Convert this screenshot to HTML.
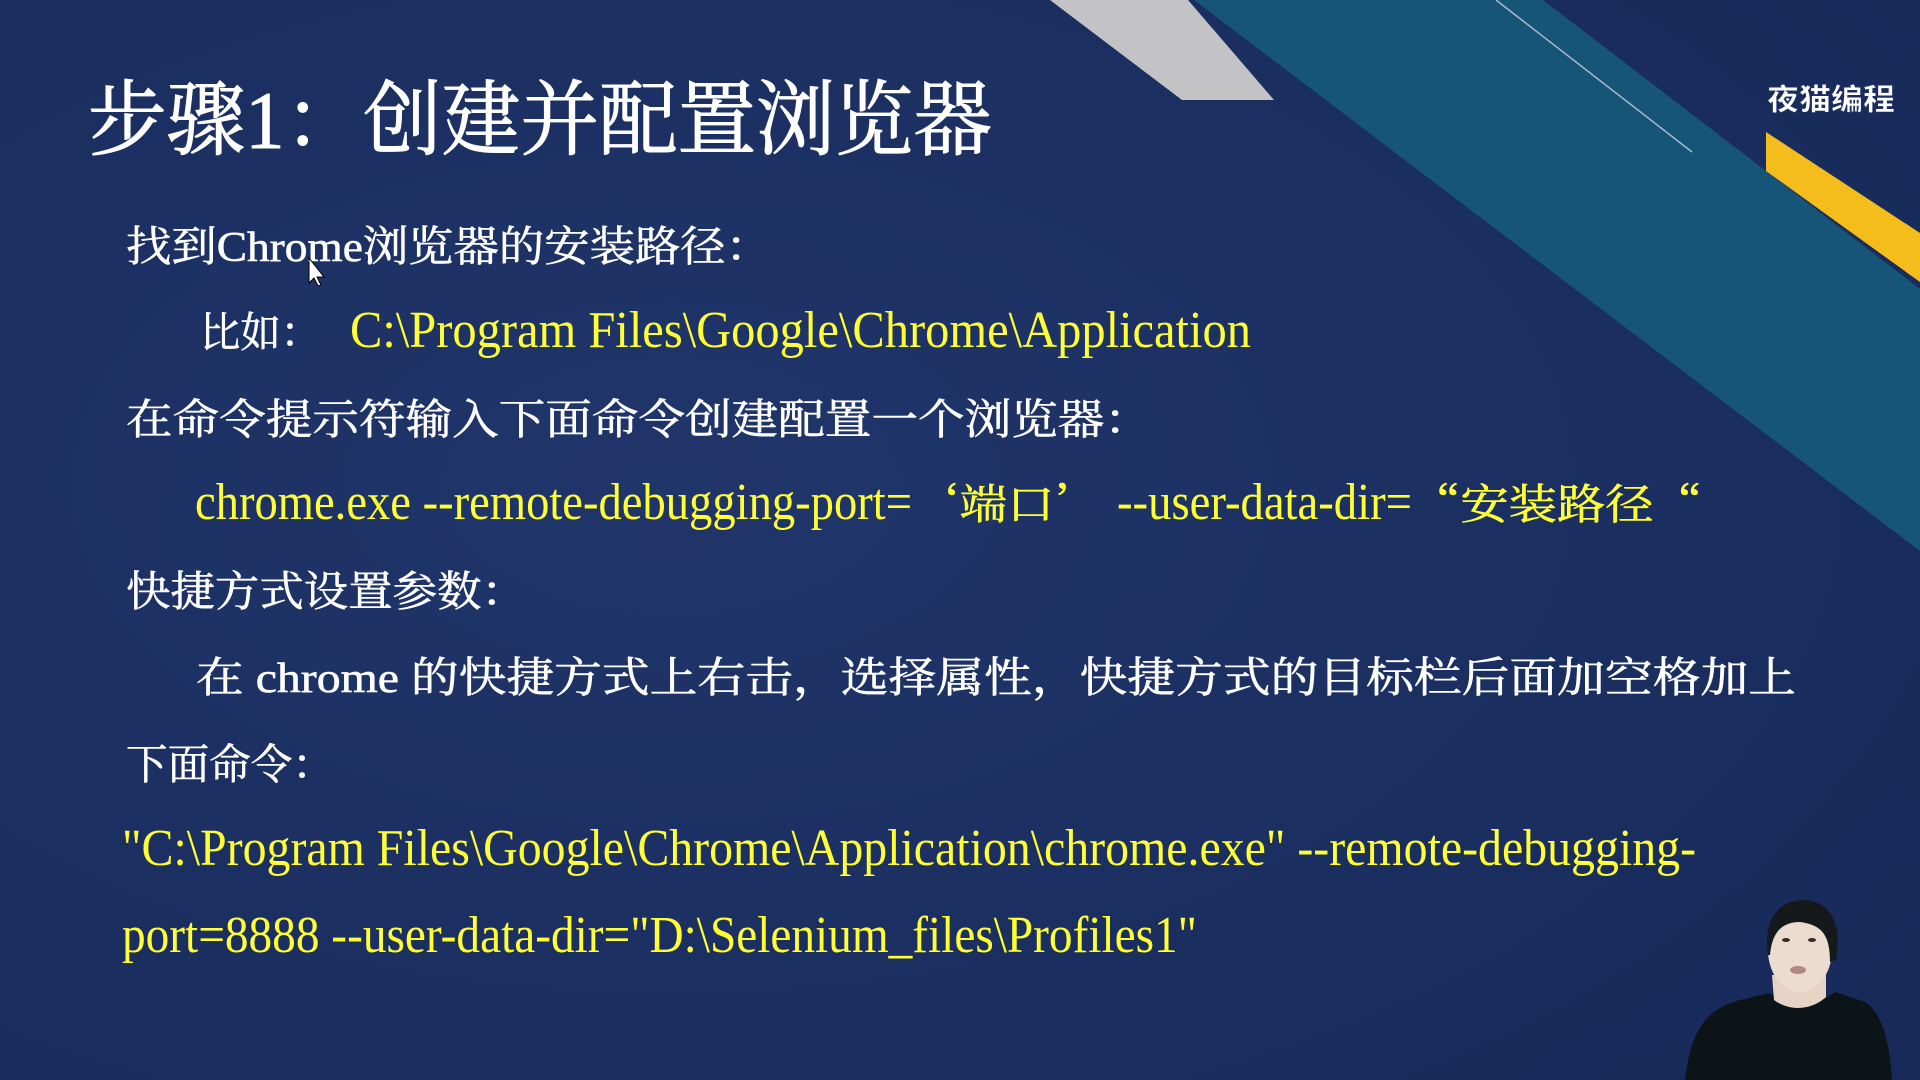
<!DOCTYPE html>
<html><head><meta charset="utf-8"><style>
html,body{margin:0;padding:0;width:1920px;height:1080px;overflow:hidden;background:#1b2f62}
svg{display:block}
.cj{font-family:"Liberation Serif","Noto Serif CJK SC",serif;fill:#fff;stroke:#fff;stroke-width:0.6}
.y{font-family:"Liberation Serif","Noto Serif CJK SC",serif;fill:#ffff33}
.yc{font-family:"Noto Serif CJK SC",serif;fill:#ffff33;stroke:#ffff33;stroke-width:0.6}
</style></head><body>
<svg width="1920" height="1080" viewBox="0 0 1920 1080" xmlns="http://www.w3.org/2000/svg">
<defs>
<radialGradient id="bg" cx="0.35" cy="0.45" r="0.8">
<stop offset="0" stop-color="#20356a"/><stop offset="1" stop-color="#172a5a"/>
</radialGradient>
</defs>
<rect width="1920" height="1080" fill="url(#bg)"/>
<polygon points="1194,0 1543,0 1920,289 1920,551" fill="#165577"/>
<polygon points="1050,0 1188,0 1274,100 1182,100" fill="#c3c3c5"/>
<line x1="1496" y1="0" x2="1692" y2="152" stroke="#a9b8cc" stroke-width="1.5"/>
<polygon points="1766,132 1920,233 1920,282 1766,171" fill="#f5bd1c"/>
<text x="1767" y="110" font-family="'Noto Sans CJK SC',sans-serif" font-weight="900" font-size="30" fill="#fff" stroke="#1b2f62" stroke-width="1" textLength="128" lengthAdjust="spacingAndGlyphs">夜猫编程</text>

<text class="cj" x="88" y="148" font-size="82" textLength="904" lengthAdjust="spacingAndGlyphs" style="stroke-width:1">步骤1：创建并配置浏览器</text>

<text class="cj" x="126" y="261" font-size="42" textLength="645" lengthAdjust="spacingAndGlyphs">找到Chrome浏览器的安装路径：</text>
<text class="cj" x="200" y="347" font-size="42" textLength="121" lengthAdjust="spacingAndGlyphs">比如：</text>
<text class="y" x="350" y="347" font-size="52" textLength="901" lengthAdjust="spacingAndGlyphs">C:\Program Files\Google\Chrome\Application</text>
<text class="cj" x="126" y="434" font-size="42" textLength="1025" lengthAdjust="spacingAndGlyphs">在命令提示符输入下面命令创建配置一个浏览器：</text>
<text class="y" x="195" y="519" font-size="52" textLength="717" lengthAdjust="spacingAndGlyphs">chrome.exe --remote-debugging-port=</text>
<text class="yc" x="912" y="519" font-size="42" textLength="190" lengthAdjust="spacingAndGlyphs">‘端口’</text>
<text class="y" x="1117" y="519" font-size="52" textLength="295" lengthAdjust="spacingAndGlyphs">--user-data-dir=</text>
<text class="yc" x="1412" y="519" font-size="42" textLength="290" lengthAdjust="spacingAndGlyphs">“安装路径“</text>
<text class="cj" x="126" y="606" font-size="42" textLength="400" lengthAdjust="spacingAndGlyphs">快捷方式设置参数：</text>
<text class="cj" x="196" y="692" font-size="42" textLength="1600" lengthAdjust="spacingAndGlyphs">在 chrome 的快捷方式上右击，选择属性，快捷方式的目标栏后面加空格加上</text>
<text class="cj" x="126" y="779" font-size="42" textLength="208" lengthAdjust="spacingAndGlyphs">下面命令：</text>
<text class="y" x="122" y="865" font-size="52" textLength="1574" lengthAdjust="spacingAndGlyphs">"C:\Program Files\Google\Chrome\Application\chrome.exe" --remote-debugging-</text>
<text class="y" x="122" y="952" font-size="52" textLength="1075" lengthAdjust="spacingAndGlyphs">port=8888 --user-data-dir="D:\Selenium_files\Profiles1"</text>

<path d="M309,258 L309,283 L314,278 L318,286 L321,285 L317,277 L324,277 Z" fill="#fff" stroke="#000" stroke-width="1"/>

<path d="M1685,1080 C1690,1040 1700,1010 1740,1000 L1770,993 C1790,1010 1810,1010 1835,992 L1865,1002 C1885,1015 1890,1050 1892,1080 Z" fill="#0c1418"/>
<path d="M1772,975 L1774,1000 C1790,1012 1812,1010 1826,997 L1826,975 Z" fill="#e7d3c6"/>
<ellipse cx="1800" cy="950" rx="32" ry="42" fill="#ecdccf"/>
<path d="M1768,955 C1762,912 1785,900 1805,900 C1832,902 1842,925 1836,960 L1830,962 C1830,935 1822,925 1800,922 C1782,922 1772,932 1770,955 Z" fill="#15191c"/>
<ellipse cx="1786" cy="940" rx="4" ry="2" fill="#3a2a25"/>
<ellipse cx="1812" cy="940" rx="4" ry="2" fill="#3a2a25"/>
<ellipse cx="1798" cy="970" rx="8" ry="4" fill="#b08a80"/>
</svg>
</body></html>
